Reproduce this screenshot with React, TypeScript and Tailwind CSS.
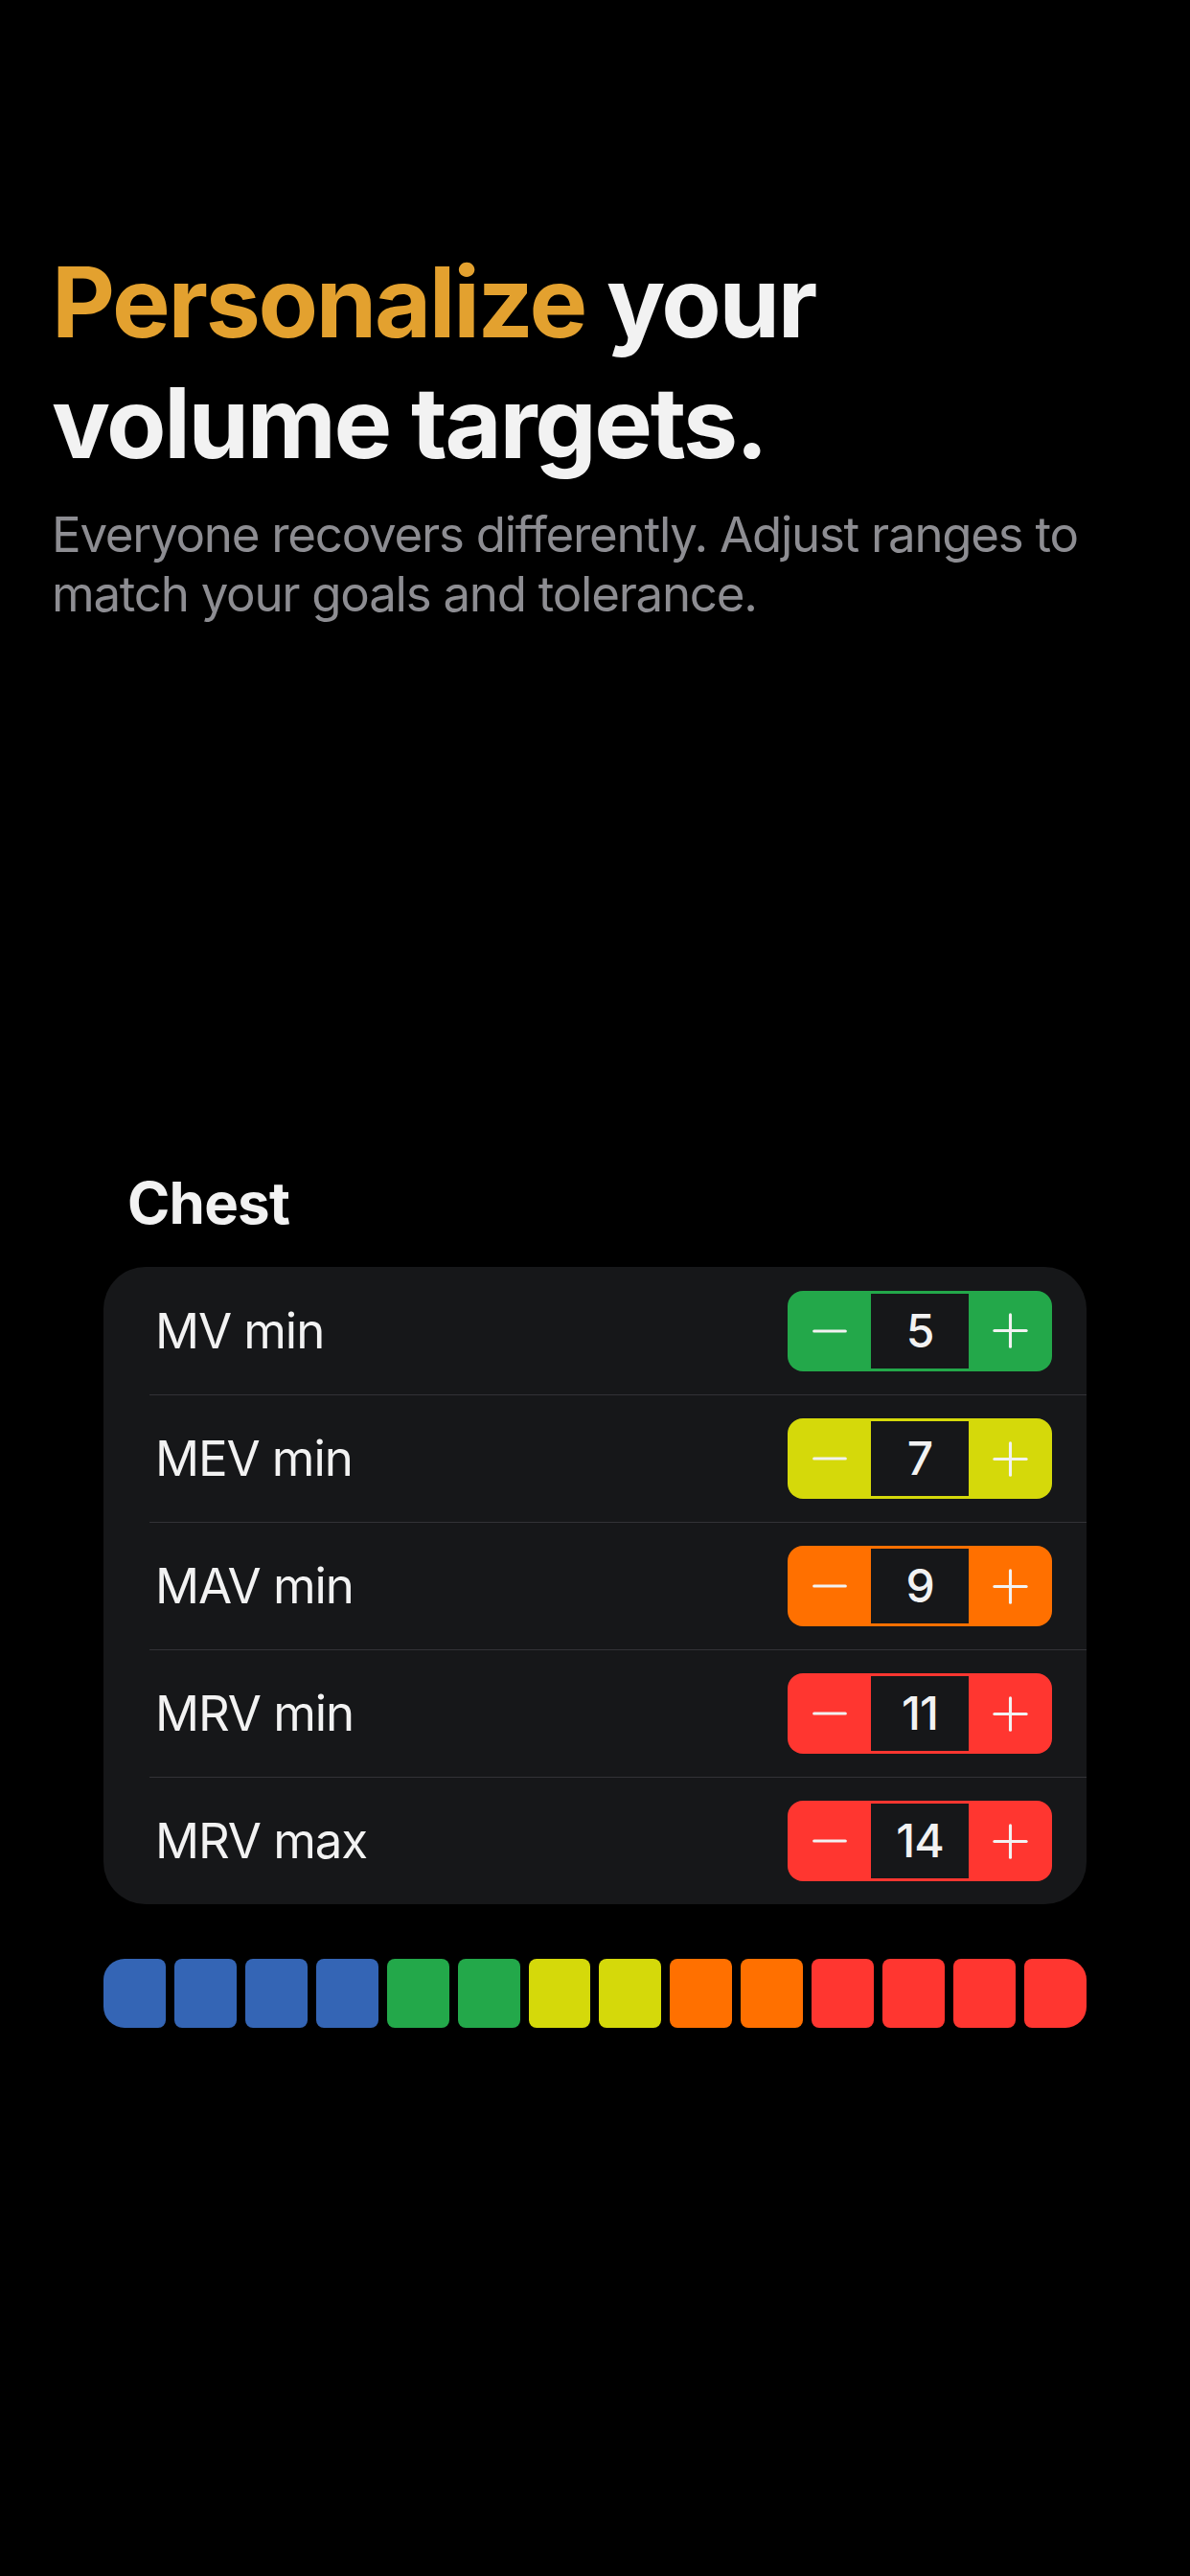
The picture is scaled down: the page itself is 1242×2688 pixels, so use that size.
import { Minus, Plus } from "lucide-react";

type Row = { label: string; value: number; color: string };

const rows: Row[] = [
  { label: "MV min", value: 5, color: "bg-[#23a84a]" },
  { label: "MEV min", value: 7, color: "bg-[#d5d90a]" },
  { label: "MAV min", value: 9, color: "bg-[#ff7000]" },
  { label: "MRV min", value: 11, color: "bg-[#ff3630]" },
  { label: "MRV max", value: 14, color: "bg-[#ff3630]" },
];

const scale = [
  "bg-[#3465b5]",
  "bg-[#3465b5]",
  "bg-[#3465b5]",
  "bg-[#3465b5]",
  "bg-[#23a84a]",
  "bg-[#23a84a]",
  "bg-[#d5d90a]",
  "bg-[#d5d90a]",
  "bg-[#ff7000]",
  "bg-[#ff7000]",
  "bg-[#ff3630]",
  "bg-[#ff3630]",
  "bg-[#ff3630]",
  "bg-[#ff3630]",
];

function Stepper({ value, color }: { value: number; color: string }) {
  return (
    <div className={`flex h-[84px] w-[276px] items-stretch rounded-[16px] py-[3px] ${color}`}>
      <button className="flex w-[87px] items-center justify-center text-[#f2f2f2]">
        <Minus size={56} strokeWidth={1.3} />
      </button>
      <div className="flex w-[102px] items-center justify-center bg-[#161719] text-[48px] font-medium tracking-[-1px] text-[#f2f2f2]">
        {value}
      </div>
      <button className="flex w-[87px] items-center justify-center text-[#f2f2f2]">
        <Plus size={57} strokeWidth={1.3} />
      </button>
    </div>
  );
}

export default function App() {
  return (
    <div className="min-h-[2688px] w-full bg-black font-['Inter',sans-serif] text-[#f2f2f2]">
      <section className="px-[54px] pt-[252px]">
        <h1 className="text-[102px] font-bold leading-[126px] tracking-[-2.3px]">
          <span className="text-[#e3a12f]">Personalize</span> your
          <br />
          volume targets.
        </h1>
        <p className="mt-[23px] text-[51px] leading-[62px] tracking-[-1.25px] text-[#8d8d92]">
          Everyone recovers differently. Adjust ranges to
          <br />
          match your goals and tolerance.
        </p>
      </section>

      <section className="px-[108px] pt-[568px]">
        <h2 className="pl-[25px] text-[60px] font-bold leading-[72px] tracking-[-0.8px]">Chest</h2>
        <div className="mt-[31px] overflow-hidden rounded-[44px] bg-[#161719]">
          {rows.map((row, i) => (
            <div key={row.label} className="pl-[48px]">
              <div
                className={`flex h-[133px] items-center justify-between pr-[36px] ${
                  i > 0 ? "border-t border-[#323236]" : ""
                }`}
              >
                <span className="pl-[6px] text-[51px] leading-[62px] tracking-[-1.1px]">{row.label}</span>
                <Stepper value={row.value} color={row.color} />
              </div>
            </div>
          ))}
        </div>

        <div className="mt-[57px] flex h-[72px] gap-[9px]">
          {scale.map((c, i) => (
            <div
              key={i}
              className={`flex-1 rounded-[8px] ${c} ${i === 0 ? "rounded-l-[22px]" : ""} ${
                i === scale.length - 1 ? "rounded-r-[22px]" : ""
              }`}
            />
          ))}
        </div>
      </section>
    </div>
  );
}
